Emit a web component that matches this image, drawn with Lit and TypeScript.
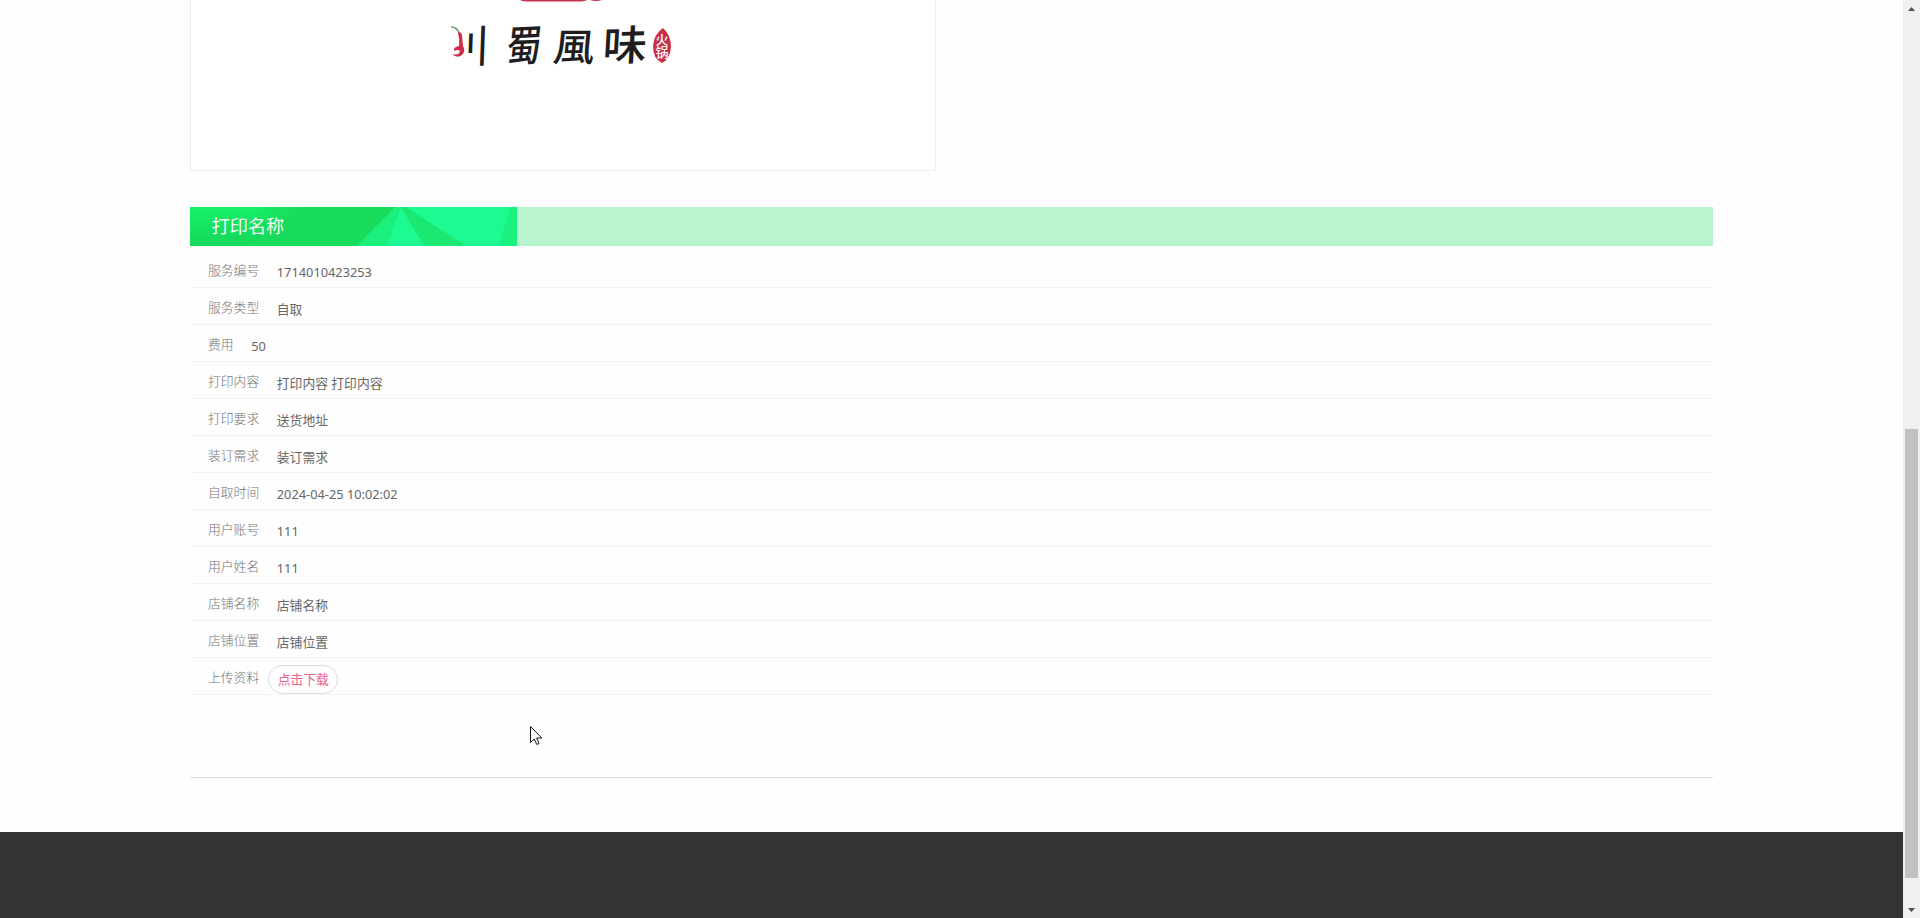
import { LitElement, css, html, svg } from 'lit';
import { customElement, property } from 'lit/decorators.js';

interface Field {
  label: string;
  value: string;
  link?: boolean;
}

const FIELDS: Field[] = [
  { label: '服务编号', value: '1714010423253' },
  { label: '服务类型', value: '自取' },
  { label: '费用', value: '50' },
  { label: '打印内容', value: '打印内容 打印内容' },
  { label: '打印要求', value: '送货地址' },
  { label: '装订需求', value: '装订需求' },
  { label: '自取时间', value: '2024-04-25 10:02:02' },
  { label: '用户账号', value: '111' },
  { label: '用户姓名', value: '111' },
  { label: '店铺名称', value: '店铺名称' },
  { label: '店铺位置', value: '店铺位置' },
  { label: '上传资料', value: '点击下载', link: true },
];

@customElement('shop-picture')
export class ShopPicture extends LitElement {
  static styles = css`
    :host {
      display: block;
      box-sizing: border-box;
      width: 746px;
      height: 171px;
      border: 1px solid #eee;
      border-top: 0;
      background: #fff;
    }
    svg {
      display: block;
    }
    text {
      font-family: 'Noto Sans CJK TC', 'Noto Sans CJK SC', sans-serif;
    }
    .brush {
      font-size: 40px;
      font-weight: 500;
      fill: #211d1e;
    }
    .seal {
      font-family: 'Noto Sans CJK SC', sans-serif;
      font-size: 13px;
      font-weight: 500;
      fill: #fff;
      writing-mode: vertical-rl;
    }
  `;

  render() {
    return html`
      <svg width="744" height="170" viewBox="191 0 744 170">
        <defs>
          <clipPath id="strokes"><path d="M14 -25H26V-8H14ZM28 -45H44V15H28Z" /></clipPath>
        </defs>
        <path d="M520 0H587Q584 1.6 578 1.6H529Q523 1.6 520 0ZM590 0H602Q596 1.8 590 0Z" fill="#c5304c" />
        <path d="M451 27Q457 27 459 33" fill="none" stroke="#5d9b6c" stroke-width="1.4" />
        <path
          d="M458 33Q461 31 462 35L463 46Q466 51 462 55Q457 59 452 54Q459 56 460 51Q458 49 454 51Q453 47 459 46Q460 40 458 33Z"
          fill="#cf3049"
        />
        ${this.brush('川', 'matrix(0.92 0 -0.04 1.14 451 62)', true)}
        ${this.brush('蜀', 'matrix(0.88 -0.04 -0.12 1.06 505 62)')}
        ${this.brush('風', 'matrix(1.04 0 -0.1 0.95 552 61)')}
        ${this.brush('味', 'matrix(1.1 -0.03 -0.06 1.04 602 61)')}
        <path d="M663 28Q671 35 671 47Q670 59 662 63Q653 59 653 46Q654 34 663 28Z" fill="#c92f49" />
        <text class="seal" x="662" y="33">火锅</text>
      </svg>
    `;
  }

  private brush(char: string, transform: string, clipped = false) {
    return svg`
      <g transform=${transform}>
        <text class="brush" clip-path=${clipped ? 'url(#strokes)' : 'none'}>${char}</text>
      </g>
    `;
  }
}

@customElement('section-title')
export class SectionTitle extends LitElement {
  @property() text = '';

  static styles = css`
    :host {
      display: grid;
      grid-template-columns: 327px 1fr;
      height: 39px;
      background: #b8f4cd;
    }
    .tab {
      display: grid;
      height: 39px;
    }
    .tab > * {
      grid-area: 1 / 1;
    }
    .label {
      padding-left: 21.5px;
      color: #f4fff8;
      font-size: 18.2px;
      line-height: 39px;
    }
  `;

  render() {
    return html`
      <div class="tab">
        <svg width="327" height="39" viewBox="0 0 327 39">
          <defs>
            <linearGradient id="glow" x1="0" y1="0" x2="0.12" y2="1">
              <stop offset="0" stop-color="#16f26a" />
              <stop offset="0.85" stop-color="#16da5b" />
            </linearGradient>
            <linearGradient id="fade">
              <stop offset="0.2" stop-color="#18db5c" stop-opacity="0" />
              <stop offset="1" stop-color="#18db5c" />
            </linearGradient>
          </defs>
          <rect width="327" height="39" fill="#18db5c" />
          <path d="M0 0H110L60 39H0Z" fill="url(#glow)" />
          <rect x="50" width="60" height="39" fill="url(#fade)" />
          <path d="M205 0H327V39H166Z" fill="#1ae872" />
          <path d="M205 0H212L197 39H168Z" fill="#1bf07d" />
          <path d="M211 0L234 39H197Z" fill="#1dfa91" />
          <path d="M216 0H321L309 39H276Z" fill="#1cfa91" />
          <path d="M321 0H327V39H309Z" fill="#19f27e" />
        </svg>
        <div class="label">${this.text}</div>
      </div>
    `;
  }
}

@customElement('field-row')
export class FieldRow extends LitElement {
  @property({ attribute: false }) field!: Field;

  static styles = css`
    :host {
      display: flex;
      box-sizing: border-box;
      height: 37px;
      padding-left: 16px;
      border-bottom: 1px solid #f3f3f3;
      font-size: 12.8px;
    }
    .label {
      color: #757575;
      font-weight: 300;
      line-height: 39px;
    }
    .value {
      margin-left: 17.6px;
      color: #666;
      line-height: 42px;
      white-space: nowrap;
    }
    .link {
      box-sizing: border-box;
      height: 29px;
      margin: 7px 0 0 9px;
      padding: 0 8.5px;
      border: 1px solid #ddd;
      border-radius: 15px;
      color: #e8648a;
      line-height: 26px;
      text-decoration: none;
    }
  `;

  render() {
    const { label, value, link } = this.field;
    return html`
      <span class="label">${label}</span>
      ${link ? html`<a class="link" href="#">${value}</a>` : html`<span class="value">${value}</span>`}
    `;
  }
}

@customElement('page-scrollbar')
export class PageScrollbar extends LitElement {
  static styles = css`
    :host {
      display: flex;
      flex-direction: column;
      align-items: center;
      background: #f0f0f0;
    }
    svg {
      display: block;
      flex: none;
    }
    .before {
      height: 412px;
    }
    .thumb {
      width: 13px;
      height: 449px;
      background: #c1c1c1;
    }
    .after {
      flex: 1;
    }
  `;

  render() {
    return html`
      <svg width="17" height="17"><path d="M5 11L8.5 7L12 11Z" fill="#505050" /></svg>
      <div class="before"></div>
      <div class="thumb"></div>
      <div class="after"></div>
      <svg width="17" height="17"><path d="M5 7L8.5 11L12 7Z" fill="#505050" /></svg>
    `;
  }
}

@customElement('app-root')
export class AppRoot extends LitElement {
  static styles = css`
    :host {
      position: relative;
      display: grid;
      grid-template-columns: 1fr 17px;
      height: 918px;
      overflow: hidden;
      background: #fefefe;
      font-family: 'Noto Sans', 'Noto Sans CJK SC', sans-serif;
    }
    .page {
      display: flex;
      flex-direction: column;
    }
    .content {
      width: 1523px;
      box-sizing: border-box;
      height: 778px;
      margin-left: 190px;
      border-bottom: 1px solid #ddd;
    }
    .title {
      margin-top: 36px;
    }
    .fields {
      padding: 5px 1px 0 2px;
    }
    .footer {
      flex: 1;
      margin-top: 54px;
      background: #333;
    }
    .cursor {
      position: absolute;
      left: 530px;
      top: 726px;
    }
  `;

  render() {
    return html`
      <div class="page">
        <div class="content">
          <shop-picture></shop-picture>
          <section-title class="title" text="打印名称"></section-title>
          <div class="fields">${FIELDS.map((field) => html`<field-row .field=${field}></field-row>`)}</div>
        </div>
        <div class="footer"></div>
      </div>
      <page-scrollbar></page-scrollbar>
      <svg class="cursor" width="13" height="20" viewBox="0 0 13 20">
        <path d="M0.5 0.5V16.5L4.2 13L6.8 18.5L9 17.5L6.6 12H11.7Z" fill="#fff" stroke="#111" />
      </svg>
    `;
  }
}
